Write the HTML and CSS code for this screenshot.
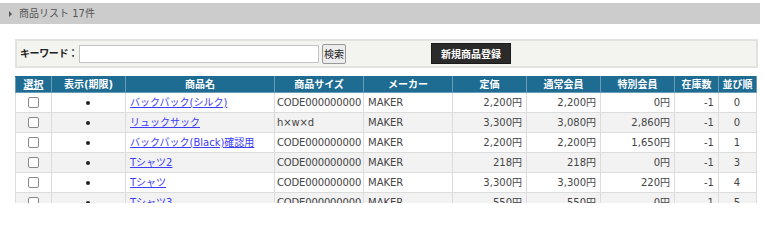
FILE: index.html
```html
<!DOCTYPE html>
<html lang="ja">
<head>
<meta charset="utf-8">
<link rel="stylesheet" href="styles.css">
</head>
<body>
<div class="titlebar"><span class="tri"></span><span class="title">商品リスト 17件</span></div>
<div class="searchbox">
  <label class="kw">キーワード：</label>
  <input class="kwinput" type="text">
  <button class="btn-search">検索</button>
  <button class="btn-new">新規商品登録</button>
</div>
<table class="list">
  <colgroup>
    <col style="width:36px"><col style="width:74px"><col style="width:149px"><col style="width:89px"><col style="width:89px"><col style="width:74px"><col style="width:74px"><col style="width:74px"><col style="width:44px"><col style="width:38px">
  </colgroup>
  <thead>
    <tr><th><u>選択</u></th><th>表示(期限)</th><th>商品名</th><th>商品サイズ</th><th>メーカー</th><th>定価</th><th>通常会員</th><th>特別会員</th><th>在庫数</th><th>並び順</th></tr>
  </thead>
  <tbody>
    <tr><td class="c"><span class="cb"></span></td><td class="c"><span class="dot"></span></td><td><a href="#">バックパック(シルク)</a></td><td class="sz">CODE000000000</td><td>MAKER</td><td class="r">2,200円</td><td class="r">2,200円</td><td class="r">0円</td><td class="r">-1</td><td class="c">0</td></tr>
    <tr><td class="c"><span class="cb"></span></td><td class="c"><span class="dot"></span></td><td><a href="#">リュックサック</a></td><td class="sz">h×w×d</td><td>MAKER</td><td class="r">3,300円</td><td class="r">3,080円</td><td class="r">2,860円</td><td class="r">-1</td><td class="c">0</td></tr>
    <tr><td class="c"><span class="cb"></span></td><td class="c"><span class="dot"></span></td><td><a href="#">バックパック(Black)確認用</a></td><td class="sz">CODE000000000</td><td>MAKER</td><td class="r">2,200円</td><td class="r">2,200円</td><td class="r">1,650円</td><td class="r">-1</td><td class="c">1</td></tr>
    <tr><td class="c"><span class="cb"></span></td><td class="c"><span class="dot"></span></td><td><a href="#">Tシャツ2</a></td><td class="sz">CODE000000000</td><td>MAKER</td><td class="r">218円</td><td class="r">218円</td><td class="r">0円</td><td class="r">-1</td><td class="c">3</td></tr>
    <tr><td class="c"><span class="cb"></span></td><td class="c"><span class="dot"></span></td><td><a href="#">Tシャツ</a></td><td class="sz">CODE000000000</td><td>MAKER</td><td class="r">3,300円</td><td class="r">3,300円</td><td class="r">220円</td><td class="r">-1</td><td class="c">4</td></tr>
    <tr><td class="c"><span class="cb"></span></td><td class="c"><span class="dot"></span></td><td><a href="#">Tシャツ3</a></td><td class="sz">CODE000000000</td><td>MAKER</td><td class="r">550円</td><td class="r">550円</td><td class="r">0円</td><td class="r">-1</td><td class="c">5</td></tr>
  </tbody>
</table>
</body>
</html>
```
FILE: styles.css
```css
html, body { margin: 0; padding: 0; background: #fff; }
body {
  font-family: "DejaVu Sans", "Noto Sans CJK JP", sans-serif;
  font-size: 10px;
  color: #333;
  height: 203px;
  overflow: hidden;
}
.titlebar {
  margin-top: 3px;
  width: 760px;
  height: 21px;
  background: #cccccc;
  display: flex;
  align-items: center;
}
.tri {
  width: 0; height: 0;
  margin-left: 9px;
  border-left: 3px solid #555;
  border-top: 3px solid transparent;
  border-bottom: 3px solid transparent;
}
.title {
  margin-left: 7px;
  font-size: 10px;
  color: #555;
  line-height: 12px;
}
.searchbox {
  box-sizing: border-box;
  margin: 15px 0 0 15px;
  width: 743px;
  height: 29px;
  background: #f3f3ef;
  border: 2px solid #e2e2de;
  display: flex;
  align-items: center;
  padding-left: 3px;
}
.kw {
  font-weight: bold;
  font-size: 10px;
  color: #222;
  width: 59px;
  flex: 0 0 59px;
  white-space: nowrap;
  line-height: 12px;
  letter-spacing: -0.4px;
}
.kwinput {
  box-sizing: border-box;
  width: 240px;
  height: 18px;
  margin: 0;
  border: 1px solid #c4c4c4;
  background: #fff;
  padding: 0 2px;
}
.btn-search {
  box-sizing: border-box;
  margin: 0 0 0 3px;
  width: 24px;
  height: 20px;
  padding: 0;
  font-family: inherit;
  font-size: 10px;
  color: #222;
  background: #ececec;
  border: 1px solid #999;
  border-radius: 2px;
}
.btn-new {
  box-sizing: border-box;
  margin: 0 0 0 85px;
  width: 80px;
  height: 21px;
  padding: 0;
  font-family: inherit;
  font-size: 10px;
  font-weight: bold;
  color: #fff;
  background: #2b2b2b;
  border: 1px solid #1a1a1a;
}
.list {
  margin: 8px 0 0 15px;
  border-collapse: collapse;
  table-layout: fixed;
  width: 742px;
  border: 1px solid #dcdcdc;
}
.list th {
  background: #1f6c93;
  color: #fff;
  font-weight: bold;
  font-size: 10px;
  height: 15px;
  padding: 0;
  line-height: 12px;
  border: 1px solid #6a9cb8;
  border-top-color: #1f6c93;
  text-align: center;
}
.list th u { text-decoration: underline; }
.list td {
  height: 19px;
  padding: 0 3px 0 2px;
  border: 1px solid #dcdcdc;
  line-height: 12px;
  white-space: nowrap;
  overflow: hidden;
  color: #444;
}
.list td:nth-child(3) { padding-left: 4px; }
.list td:nth-child(5) { padding-left: 4px; }
.list td.sz { letter-spacing: -0.15px; }
.list td.r { padding-right: 4px; }
.list tbody tr:nth-child(even) td { background: #f2f2f2; }
.list td.c { text-align: center; }
.list td.r { text-align: right; }
.list a { color: #3c3cf5; text-decoration: underline; }
.cb {
  display: inline-block;
  box-sizing: border-box;
  width: 11px;
  height: 11px;
  border: 1px solid #888;
  border-radius: 2px;
  background: #fff;
  vertical-align: middle;
}
.dot {
  display: inline-block;
  width: 4px;
  height: 4px;
  border-radius: 50%;
  background: #222;
  vertical-align: middle;
}
```
